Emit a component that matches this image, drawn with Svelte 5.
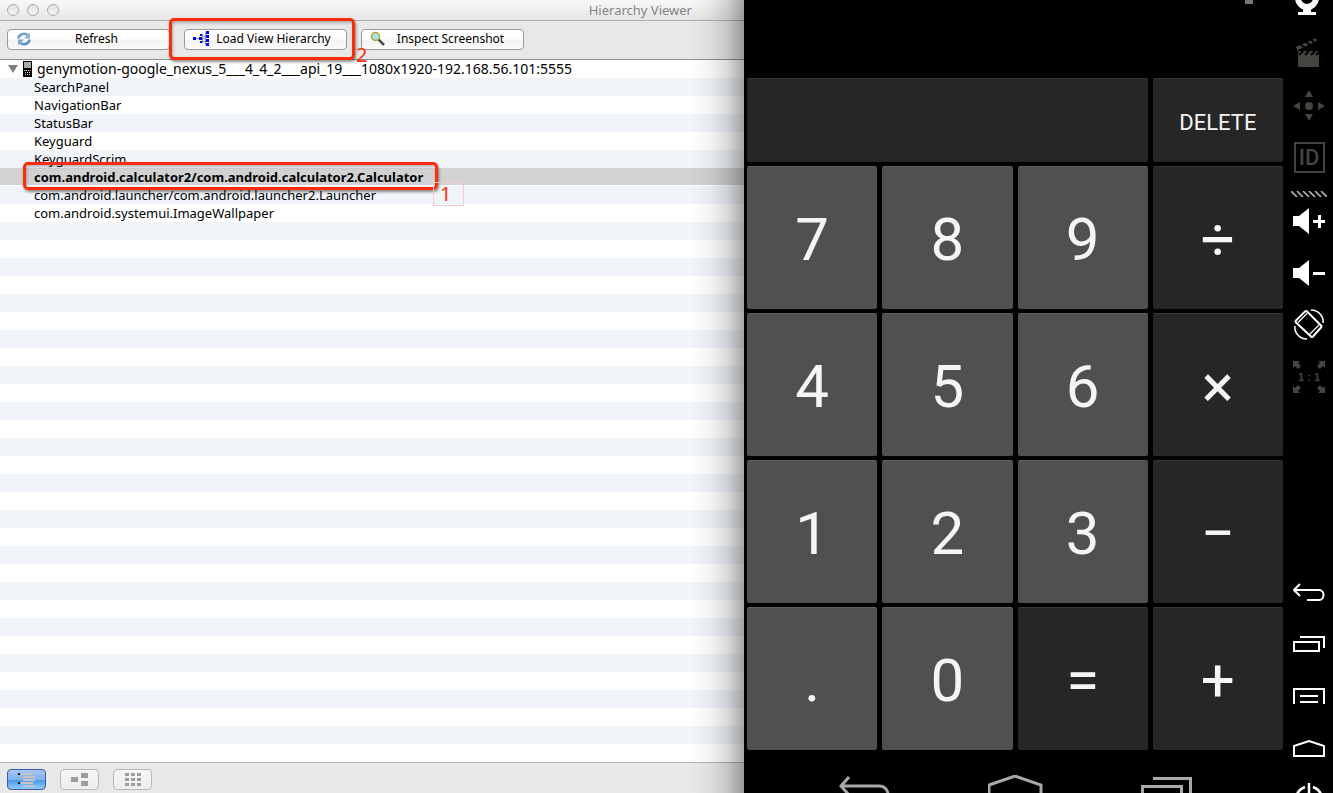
<script lang="ts">
  const windows = [
    'SearchPanel',
    'NavigationBar',
    'StatusBar',
    'Keyguard',
    'KeyguardScrim',
    'com.android.calculator2/com.android.calculator2.Calculator',
    'com.android.launcher/com.android.launcher2.Launcher',
    'com.android.systemui.ImageWallpaper'
  ];
  let selected = $state(5);
  let display = $state('');

  const keys = ['7', '8', '9', '÷', '4', '5', '6', '×', '1', '2', '3', '−', '.', '0', '=', '+'];
  const isDigit = (k: string) => /[0-9.]/.test(k);
</script>

<div class="desktop">
  <section class="viewer">
    <header class="titlebar">
      <div class="lights"><i></i><i></i><i></i></div>
      <h1>Hierarchy Viewer</h1>
    </header>

    <div class="toolbar">
      <button class="tool">
        <svg width="16" height="16" viewBox="0 0 16 16" fill="none">
          <path d="M2.5 7.5A5.5 5 0 0 1 11.5 4" stroke="#6f9fcb" stroke-width="2.6" />
          <path d="M14 1.500V7.500H8Z" fill="#86b0d8" />
          <path d="M13.500 8.500A5.500 5 0 0 1 4.500 12" stroke="#5a90c4" stroke-width="2.600" />
          <path d="M2 14.500V8.500H8Z" fill="#78a8d6" />
        </svg>
        <span>Refresh</span>
      </button>
      <div class="marked">
        <button class="tool">
          <svg width="16" height="16" viewBox="0 0 16 16">
            <path d="M3 7.500H12M9.500 3V12M12.500 1.500V14M10 5.500H13M10 10.500H13" fill="none" stroke="#8c8cb4" />
            <g fill="#0000f0">
              <path d="M0 6h3v3H0zM6 6h3v3H6zM7 3h2v2H7zM7 10h2v2H7zM13 0h3v3h-3zM13 4h3v3h-3zM13 8h3v3h-3zM13 12h3v3h-3z" />
            </g>
          </svg>
          <span>Load View Hierarchy</span>
        </button>
        <div class="frame frame-button"></div>
        <b class="note note-two">2</b>
      </div>
      <button class="tool">
        <svg width="16" height="16" viewBox="0 0 16 16">
          <path d="M8 8L14 14" stroke="#4a4f55" stroke-width="2.500" />
          <circle cx="5.500" cy="5.500" r="4" fill="#a9e2e4" stroke="#b5a432" stroke-width="1.500" />
        </svg>
        <span>Inspect Screenshot</span>
      </button>
    </div>

    <div class="tree">
      <div class="device">
        <svg width="10" height="8" viewBox="0 0 10 8"><path d="M0 0H10L5 8Z" fill="#808080" /></svg>
        <svg width="9" height="16" viewBox="0 0 9 16" shape-rendering="crispEdges">
          <rect width="9" height="16" rx="1" fill="#000" />
          <rect x="1" y="1" width="7" height="6" fill="#a8aca8" />
          <path d="M3 9.500h1M5 9.500h1M2 11.500h1M4 11.500h1M6 11.500h1M2 13.500h1M4 13.500h1M6 13.500h1" stroke="#ddd" />
          <path d="M1 9.500h2" stroke="#2fc640" /><path d="M6 9.500h2" stroke="#e02020" />
        </svg>
        <span>genymotion-google_nexus_5___4_4_2___api_19___1080x1920-192.168.56.101:5555</span>
      </div>
      <ul>
        {#each windows as name, i}
          <li class:selected={i === selected}>
            <button onclick={() => (selected = i)}>{name}</button>
            {#if i === 5}
              <div class="frame frame-row"></div>
              <span class="note note-one">1</span>
            {/if}
          </li>
        {/each}
      </ul>
    </div>

    <footer class="modes">
      <button class="active" aria-label="Tree list">
        <svg width="19" height="15" viewBox="0 0 19 15">
          <path d="M1 1h2v2H1zM1 10h2v2H1z" fill="#222" />
          <path d="M4 1h12v2H4zM6 4h12v2H6zM6 7h12v2H6zM4 10h12v2H4zM6 13h12v2H6z" fill="#c4c4c4" />
        </svg>
      </button>
      <button aria-label="Tree view">
        <svg width="17" height="13" viewBox="0 0 17 13">
          <path d="M0 4h7v5H0zM10 0h7v5h-7zM10 8h7v5h-7z" fill="#9d9d9d" />
        </svg>
      </button>
      <button aria-label="Pixel grid">
        <svg width="16" height="13" viewBox="0 0 16 13">
          <path d="M0 0h4v3H0zM6 0h4v3H6zM12 0h4v3h-4zM0 5h4v3H0zM6 5h4v3H6zM12 5h4v3h-4zM0 10h4v3H0zM6 10h4v3H6zM12 10h4v3h-4z" fill="#9d9d9d" />
        </svg>
      </button>
    </footer>
  </section>

  <section class="emulator">
    <div class="phone">
      <div class="status"><i></i></div>
      <div class="keypad">
        <input class="display" aria-label="Result" readonly value={display} />
        <button class="delete" onclick={() => (display = display.slice(0, -1))}>DELETE</button>
        {#each keys as k}
          <button class={isDigit(k) ? 'digit' : 'op'} onclick={() => (display += k)}>{k}</button>
        {/each}
      </div>
      <nav class="softkeys">
        <button aria-label="Back">
          <svg width="54" height="34" viewBox="0 0 54 34" fill="none" stroke="#a8a8a8" stroke-width="3">
            <path d="M11 2L3 11L11 20M3 11H41C53 11 53 28 41 28H20" />
          </svg>
        </button>
        <button aria-label="Home">
          <svg width="56" height="34" viewBox="0 0 56 34" fill="none" stroke="#a8a8a8" stroke-width="3">
            <path d="M1 30V10L27 1L53 10V30Z" />
          </svg>
        </button>
        <button aria-label="Recent apps">
          <svg width="52" height="34" viewBox="0 0 52 34" fill="none" stroke="#a8a8a8" stroke-width="3">
            <path d="M13 3.500H50.500V25M2.500 11.500H41.500V31H2.500Z" />
          </svg>
        </button>
      </nav>
    </div>

    <aside class="side">
      <button class="slot first" aria-label="Camera">
        <svg width="32" height="24" viewBox="0 0 32 24" fill="none" stroke="#fff">
          <circle cx="14" cy="6" r="9" stroke-width="6" />
          <path d="M10 15H18V21H10Z" fill="#fff" stroke="none" /><path d="M5 21.500H23" stroke-width="3" />
        </svg>
      </button>
      <button class="slot" aria-label="Record">
        <svg width="32" height="32" viewBox="0 0 32 32" fill="#45453f">
          <path d="M5 14H26V30H5ZM3 10L23 1L24 4L5 13V15Z" />
          <path d="M6 18L10 14M12 18L16 14M18 18L22 14M23 18L27 14M7 7L12 11M12 4L17 8M17 2L22 6" stroke="#000" stroke-width="2" />
        </svg>
      </button>
      <button class="slot" aria-label="Move">
        <svg width="32" height="32" viewBox="0 0 32 32" fill="#45453f">
          <circle cx="16" cy="17" r="4" />
          <path d="M16 1L20 8H12ZM16 32L12 25H20ZM0 17L7 13V21ZM32 17L25 13V21Z" />
        </svg>
      </button>
      <button class="slot id" aria-label="Identifiers"><span>ID</span></button>
      <svg class="hatch" width="36" height="6" viewBox="0 0 36 6" stroke="#b8b8b8" stroke-width="1.600">
        <path d="M0 0L6 6M6 0L12 6M12 0L18 6M18 0L24 6M24 0L30 6M30 0L36 6" />
      </svg>
      <button class="slot" aria-label="Volume up">
        <svg width="32" height="26" viewBox="0 0 32 26" fill="#fff">
          <path d="M0 8H6L16 0V26L6 18H0ZM20 12H25V7H28V12H32V15H28V20H25V15H20Z" />
        </svg>
      </button>
      <button class="slot" aria-label="Volume down">
        <svg width="32" height="26" viewBox="0 0 32 26" fill="#fff">
          <path d="M0 8H6L16 0V26L6 18H0ZM20 12H32V15H20Z" />
        </svg>
      </button>
      <button class="slot" aria-label="Rotate">
        <svg width="32" height="32" viewBox="0 0 32 32" fill="none" stroke="#fff">
          <path d="M14 2.500L28 16.500Q29 17.500 28 18.500L20 27.500Q19 28.500 18 27.500L3 13.500Q2 12.500 3 11.500L12 2.500Q13 1.500 14 2.500Z" stroke-width="2" />
          <path d="M5 13.500L14 4.500M16.500 25.500L26 16" stroke-width="1.200" />
          <path d="M18 1C26 1 31 8 30 14M14 30C6 30 1 23 2 17" stroke-width="1.500" />
        </svg>
      </button>
      <button class="slot ratio" aria-label="Actual size">
        <svg width="32" height="32" viewBox="0 0 32 32" fill="#45453f">
          <path d="M0 0H7L5 2L8 5L5 8L2 5L0 7Z" />
          <path d="M32 0H25L27 2L24 5L27 8L30 5L32 7ZM0 32H7L5 30L8 27L5 24L2 27L0 25ZM32 32H25L27 30L24 27L27 24L30 27L32 25Z" />
        </svg>
        <span>1 : 1</span>
      </button>

      <button class="slot lower" aria-label="Back">
        <svg width="32" height="18" viewBox="0 0 32 18" fill="none" stroke="#fff" stroke-width="2">
          <path d="M7 1L1 7L7 13M1 7H26C32 7 32 17 26 17H14" />
        </svg>
      </button>
      <button class="slot" aria-label="Recent apps">
        <svg width="32" height="16" viewBox="0 0 32 16" fill="none" stroke="#fff" stroke-width="2">
          <path d="M7 1H31V12M1 6H26V15H1Z" />
        </svg>
      </button>
      <button class="slot" aria-label="Menu">
        <svg width="32" height="18" viewBox="0 0 32 18" fill="none" stroke="#fff" stroke-width="2">
          <path d="M1 17V2H31V17M7 9H25M7 15H25" />
        </svg>
      </button>
      <button class="slot" aria-label="Home">
        <svg width="32" height="17" viewBox="0 0 32 17" fill="none" stroke="#fff" stroke-width="2">
          <path d="M1 16V6L16 1L31 6V16Z" />
        </svg>
      </button>
      <button class="slot last" aria-label="Power">
        <svg width="32" height="32" viewBox="0 0 32 32" fill="none" stroke="#fff" stroke-width="2.500">
          <path d="M16 0V16M12 4A13 13 0 1 0 20 4" />
        </svg>
      </button>
    </aside>
  </section>
</div>

<style>
  :global(body) { margin: 0; background: #000; }
  * { box-sizing: border-box; }
  button { border: 0; padding: 0; margin: 0; background: none; font: inherit; color: inherit; }
  svg { display: block; flex: none; }

  .desktop {
    display: grid;
    grid-template-columns: minmax(0, 744fr) minmax(0, 589fr);
    height: 100vh;
    overflow: hidden;
    font: 13px/18px "Noto Sans", "Open Sans", sans-serif;
    color: #000;
  }

  .viewer { position: relative; display: flex; flex-direction: column; min-height: 0; background: #e8e8e8; }
  .viewer::after {
    content: "";
    position: absolute;
    inset: 0 0 0 auto;
    width: 54px;
    pointer-events: none;
    background: linear-gradient(to right, transparent, rgba(0, 0, 0, 0.04) 35%, rgba(0, 0, 0, 0.14) 68%, rgba(0, 0, 0, 0.34));
  }
  .titlebar {
    flex: none;
    display: flex;
    justify-content: space-between;
    align-items: center;
    height: 21px;
    padding: 0 52px 0 7px;
    background: linear-gradient(#f8f8f8, #e6e6e6);
    border-bottom: 1px solid #b0b0b0;
  }
  .lights { display: flex; gap: 8px; }
  .lights i {
    width: 12px;
    height: 12px;
    border: 1px solid #aaa;
    border-radius: 50%;
    background: linear-gradient(#e2e2e2, #f6f6f6);
  }
  h1 { margin: 0; font-size: 13px; font-weight: 400; color: #858585; }

  .toolbar {
    flex: none;
    display: flex;
    align-items: center;
    gap: 14px;
    height: 39px;
    padding: 0 7px 2px;
    border-bottom: 1px solid #8e8e8e;
  }
  .tool {
    display: flex;
    align-items: center;
    width: 163px;
    height: 21px;
    padding: 0 8px 1px;
    border: 1px solid #9a9a9a;
    border-radius: 4px;
    background: linear-gradient(#fff, #fff 45%, #f3f3f3 55%, #fafafa);
    font-size: 12px;
    white-space: nowrap;
  }
  .tool span { flex: 1; text-align: center; }
  .marked { position: relative; }
  .frame {
    position: absolute;
    border: 3px solid #fd2c08;
    border-radius: 5px;
    box-shadow: 1px 2px 3px rgba(0, 0, 0, 0.45), inset 1px 2px 3px rgba(0, 0, 0, 0.25);
    pointer-events: none;
  }
  .frame-button { inset: -11px -8px -10px -15px; }
  .note { position: absolute; font-size: 20px; font-weight: 400; line-height: 22px; color: #fd2c08; }
  .note-two { left: 172px; top: 18px; line-height: 16px; }

  .tree {
    flex: 1;
    min-height: 0;
    overflow: hidden;
    background: repeating-linear-gradient(#fff 0 18px, #f1f5fa 18px 36px);
    white-space: nowrap;
  }
  .device { display: flex; align-items: center; gap: 5px; height: 18px; padding-left: 8px; font-size: 14px; }
  ul { list-style: none; margin: 0; padding: 0; }
  li { position: relative; height: 18px; padding-left: 34px; }
  li button { display: block; line-height: 18px; }
  .selected { background: #d2d2d2; border-bottom: 1px solid #fff; }
  .selected button { font-weight: 700; }
  .frame-row { left: 23px; top: -6px; width: 415px; height: 28px; }
  .note-one {
    left: 433px;
    top: 14px;
    width: 31px;
    height: 24px;
    padding-left: 6px;
    border: 1px solid #f5cccc;
  }

  .modes {
    flex: none;
    display: flex;
    align-items: center;
    gap: 14px;
    height: 31px;
    padding: 3px 7px 0;
    border-top: 1px solid #b4b4b4;
  }
  .modes button {
    display: grid;
    place-items: center;
    width: 39px;
    height: 21px;
    border: 1px solid #b9b9b9;
    border-radius: 4px;
    background: linear-gradient(#f6f6f6, #eee);
  }
  .modes .active { border-color: #4558a8; background: linear-gradient(#a8c6f0, #7fb2ee 50%, #4b9bea 55%, #8ccdfa); }

  .emulator { display: flex; min-width: 0; min-height: 0; background: #000; }
  .phone { flex: 1; min-width: 0; display: flex; flex-direction: column; padding-left: 3px; }
  .status { flex: none; display: flex; justify-content: flex-end; height: 78px; padding-right: 30px; }
  .status i { width: 8px; height: 4px; background: #777; }
  .keypad {
    flex: 1;
    min-height: 0;
    display: grid;
    grid-template-columns: repeat(4, minmax(0, 1fr));
    grid-template-rows: minmax(0, 84fr) repeat(4, minmax(0, 143fr));
    gap: 4px 5px;
    font-family: Roboto, sans-serif;
    color: #f5f5f5;
  }
  .keypad button, .display { border-radius: 2px; border-top: 1px solid #383838; background: #262626; }
  .keypad button { padding-top: 4px; }
  .display { grid-column: span 3; width: 100%; min-width: 0; margin: 0; padding: 0 12px; border-width: 1px 0 0; color: inherit; font: 300 40px Roboto, sans-serif; text-align: right; }
  .delete { font-size: 22px; font-weight: 400; }
  .keypad .digit { background: #505050; border-top-color: #606060; font-size: 60px; font-weight: 400; }
  .op { font-size: 60px; font-weight: 400; }
  .softkeys { flex: none; display: flex; justify-content: space-between; align-items: flex-start; height: 43px; padding: 25px 91px 0; overflow: hidden; }

  .side { flex: none; width: 50px; display: flex; flex-direction: column; align-items: center; padding-left: 2px; overflow: hidden; }
  .slot { flex: none; display: grid; place-items: center; width: 36px; height: 52px; }
  .first { height: 27px; align-items: end; padding-bottom: 11px; }
  .first svg { margin-top: -11px; }
  .hatch { margin: 8px 0 -2px; }
  .id span {
    width: 31px;
    height: 31px;
    border: 2px solid #45453f;
    font: 500 22px/27px Roboto, sans-serif;
    text-align: center;
    color: #45453f;
  }
  .ratio > * { grid-area: 1 / 1; }
  .ratio span { font: 700 11px/14px "Liberation Sans", sans-serif; color: #45453f; }
  .lower { margin-top: auto; }
  .last { height: 19px; align-items: start; padding-top: 9px; overflow: hidden; }
</style>
